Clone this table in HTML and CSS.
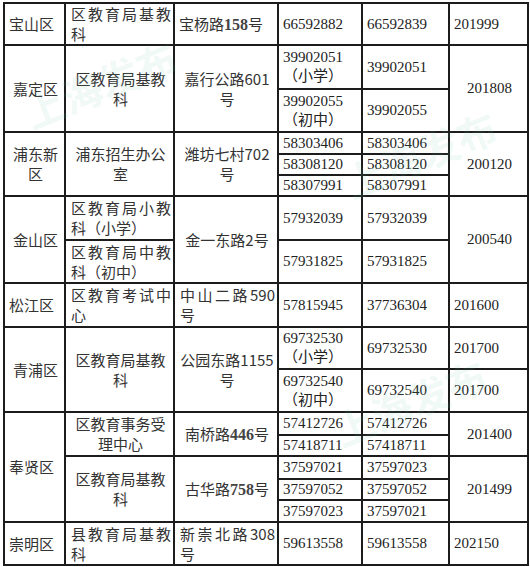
FILE: index.html
```html
<!DOCTYPE html>
<html lang="zh-CN">
<head>
<meta charset="utf-8">
<title>区教育局联系方式</title>
<link rel="stylesheet" href="styles.css">
</head>
<body>
<div class="page">
<table class="list">
<colgroup>
<col class="w1"><col class="w2"><col class="w3"><col class="w4"><col class="w5"><col class="w6">
</colgroup>
<tbody>
<tr class="h42">
  <td class="zh">宝山区</td>
  <td class="zh j">区教育局基教科</td>
  <td class="zh">宝杨路<span class="d">158</span>号</td>
  <td class="num">66592882</td>
  <td class="num">66592839</td>
  <td class="num">201999</td>
</tr>
<tr class="h44">
  <td class="zh c" rowspan="2">嘉定区</td>
  <td class="zh c" rowspan="2">区教育局基教科</td>
  <td class="zh c" rowspan="2">嘉行公路601号</td>
  <td class="num">39902051（小学）</td>
  <td class="num">39902051</td>
  <td class="num c" rowspan="2">201808</td>
</tr>
<tr class="h43">
  <td class="num">39902055（初中）</td>
  <td class="num">39902055</td>
</tr>
<tr class="h22">
  <td class="zh c" rowspan="3">浦东新区</td>
  <td class="zh c" rowspan="3">浦东招生办公室</td>
  <td class="zh c" rowspan="3">潍坊七村702号</td>
  <td class="num">58303406</td>
  <td class="num">58303406</td>
  <td class="num c" rowspan="3">200120</td>
</tr>
<tr class="h21">
  <td class="num">58308120</td>
  <td class="num">58308120</td>
</tr>
<tr class="h21">
  <td class="num">58307991</td>
  <td class="num">58307991</td>
</tr>
<tr class="h44">
  <td class="zh c" rowspan="2">金山区</td>
  <td class="zh j">区教育局小教科（小学）</td>
  <td class="zh c" rowspan="2">金一东路2号</td>
  <td class="num">57932039</td>
  <td class="num">57932039</td>
  <td class="num c" rowspan="2">200540</td>
</tr>
<tr class="h43">
  <td class="zh j">区教育局中教科（初中）</td>
  <td class="num">57931825</td>
  <td class="num">57931825</td>
</tr>
<tr class="h44">
  <td class="zh">松江区</td>
  <td class="zh j">区教育考试中心</td>
  <td class="zh j">中山二路590号</td>
  <td class="num">57815945</td>
  <td class="num">37736304</td>
  <td class="num">201600</td>
</tr>
<tr class="h42">
  <td class="zh c" rowspan="2">青浦区</td>
  <td class="zh c" rowspan="2">区教育局基教科</td>
  <td class="zh c" rowspan="2">公园东路1155号</td>
  <td class="num">69732530（小学）</td>
  <td class="num">69732530</td>
  <td class="num">201700</td>
</tr>
<tr class="h43">
  <td class="num">69732540（初中）</td>
  <td class="num">69732540</td>
  <td class="num">201700</td>
</tr>
<tr class="h23">
  <td class="zh" rowspan="5">奉贤区</td>
  <td class="zh c" rowspan="2">区教育事务受理中心</td>
  <td class="zh c" rowspan="2">南桥路<span class="d">446</span>号</td>
  <td class="num">57412726</td>
  <td class="num">57412726</td>
  <td class="num c" rowspan="2">201400</td>
</tr>
<tr class="h21">
  <td class="num">57418711</td>
  <td class="num">57418711</td>
</tr>
<tr class="h23">
  <td class="zh c" rowspan="3">区教育局基教科</td>
  <td class="zh c" rowspan="3">古华路<span class="d">758</span>号</td>
  <td class="num">37597021</td>
  <td class="num">37597023</td>
  <td class="num c" rowspan="3">201499</td>
</tr>
<tr class="h21">
  <td class="num">37597052</td>
  <td class="num">37597052</td>
</tr>
<tr class="h22">
  <td class="num">37597023</td>
  <td class="num">37597021</td>
</tr>
<tr class="h43">
  <td class="zh">崇明区</td>
  <td class="zh j">县教育局基教科</td>
  <td class="zh j">新崇北路308号</td>
  <td class="num">59613558</td>
  <td class="num">59613558</td>
  <td class="num">202150</td>
</tr>
</tbody>
</table>
<div class="mark m1">上海发布</div>
<div class="mark m2">上海发布</div>
<div class="mark m3">上海发布</div>
</div>
</body>
</html>
```
FILE: styles.css
```css
html, body {
  margin: 0;
  padding: 0;
  background: #ffffff;
}

.page {
  position: relative;
  width: 530px;
  height: 567px;
  overflow: hidden;
  padding-top: 2px;
  box-sizing: border-box;
}

.list {
  border-collapse: collapse;
  table-layout: fixed;
  width: 524px;
  margin-left: 3px;
  font-size: 15px;
  color: #222;
}

.w1 { width: 61px; }
.w2 { width: 109px; }
.w3 { width: 104px; }
.w4 { width: 84px; }
.w5 { width: 87px; }
.w6 { width: 79px; }

.h21 { height: 21px; }
.h22 { height: 22px; }
.h23 { height: 23px; }
.h42 { height: 42px; }
.h43 { height: 43px; }
.h44 { height: 44px; }

.list td {
  border: 2px solid #1c1c1c;
  padding: 0 2px 0 4px;
  vertical-align: middle;
  line-height: 19px;
  overflow: hidden;
}

.zh {
  font-family: "Noto Sans CJK SC", sans-serif;
  color: #333;
}

.list td.zh {
  line-height: 20px;
}

.zh.j {
  padding-left: 5px;
  padding-right: 2px;
}

.num {
  font-family: "Liberation Serif", "Noto Sans CJK SC", serif;
  color: #222;
}

.d {
  font-family: "Liberation Serif", serif;
  font-weight: bold;
  font-size: 16px;
  color: #444;
}

.c { text-align: center; }
.j { text-align: justify; }

.mark {
  position: absolute;
  font-family: "Noto Sans CJK SC", sans-serif;
  font-weight: bold;
  font-size: 40px;
  line-height: 44px;
  color: rgba(110, 200, 170, 0.11);
  transform: rotate(-22deg);
  white-space: nowrap;
  pointer-events: none;
}

.m1 { left: 20px; top: 62px; }
.m2 { left: 340px; top: 132px; }
.m3 { left: 330px; top: 380px; }
```
